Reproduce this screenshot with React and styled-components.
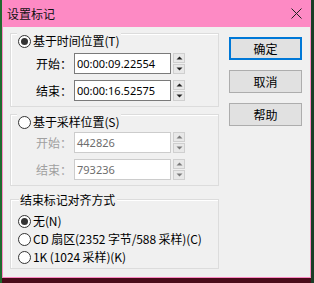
import React from 'react';
import styled, { createGlobalStyle } from 'styled-components';

const Global = createGlobalStyle`
  html, body { margin: 0; padding: 0; }
  body {
    width: 314px; height: 283px; overflow: hidden;
    background: #4a0c1a;
    font-family: "Noto Sans CJK SC", "Noto Sans", sans-serif;
  }
`;

const Desktop = styled.div`
  width: 314px; height: 283px;
  display: flex; align-items: flex-start;
  background:
    linear-gradient(to right, #1f6a2e 0, #1f6a2e 2px, transparent 2px, transparent 311px, #1b3d26 311px),
    #4a0c1a;
`;

const Window = styled.div`
  margin-left: 2px;
  width: 309px; height: 278px;
  display: flex; flex-direction: column;
`;

const TitleBar = styled.div`
  height: 27px; flex: none;
  background: #fd8ac4;
  display: flex; align-items: center; justify-content: space-between;
  padding: 0 9px 0 5px;
  box-sizing: border-box;
`;

const Title = styled.span`
  font-size: 12px; color: #111; line-height: 16px;
`;

const Client = styled.div`
  flex: 1;
  background: #f0f0f0;
  border: 1px solid #fd8ac4; border-top: none;
  display: flex; align-items: flex-start;
  padding: 6px 0 0 7px;
  box-sizing: border-box;
  gap: 10px;
`;

const LeftCol = styled.div`
  width: 209px;
  display: flex; flex-direction: column;
`;

const Group = styled.div`
  border: 1px solid #dcdcdc;
  box-shadow: inset 1px 1px 0 #fff;
  display: flex; flex-direction: column;
  padding: 0 0 ${p => p.$pb}px 0;
  margin-top: ${p => p.$mt}px;
`;

const Header = styled.div`
  align-self: flex-start;
  margin: ${p => p.$legend ? '-8px 0 0 8px' : '-1px 0 0 6px'};
  padding: 0 2px 0 1px;
  background: #f0f0f0;
  display: flex; align-items: center;
  height: 16px;
  gap: 2px;
  font-size: 12px; color: #000;
`;

const RadioCircle = styled.span`
  width: 13px; height: 13px; box-sizing: border-box;
  border-radius: 50%;
  border: 1px solid #333;
  background: #fff;
  display: inline-flex; align-items: center; justify-content: center;
  flex: none;
  &::after {
    content: '';
    width: 7px; height: 7px; border-radius: 50%;
    background: ${p => p.$on ? '#333' : 'transparent'};
  }
`;

const RadioText = styled.span`
  font-size: 12px; line-height: 16px; white-space: nowrap; color: #000;
  letter-spacing: -0.1px;
`;

const FieldRows = styled.div`
  display: flex; flex-direction: column;
  gap: 6px;
  margin-top: ${p => p.$mt}px;
  padding-left: 25px;
`;

const FieldRow = styled.div`
  display: flex; align-items: center; height: 21px;
`;

const FieldLabel = styled.span`
  width: 38px; font-size: 12px; line-height: 16px;
  color: ${p => p.$disabled ? '#a0a0a0' : '#000'};
`;

const Input = styled.div`
  width: 97px; height: 21px; box-sizing: border-box;
  border: 1px solid ${p => p.$disabled ? '#cccccc' : '#7a7a7a'};
  background: #fff;
  display: flex; align-items: center;
  padding-left: 2px;
  font-family: "Noto Sans", "Noto Sans CJK SC", sans-serif;
  font-size: 11px;
  color: ${p => p.$disabled ? '#6d6d6d' : '#000'};
`;

const Spinner = styled.div`
  margin-left: 2px;
  width: 12px; height: 21px;
  display: flex; flex-direction: column; gap: 1px;
`;

const SpinBtn = styled.div`
  flex: 1;
  background: #e8e8e8;
  border: 1px solid #cfcfcf;
  box-sizing: border-box;
  display: flex; align-items: center; justify-content: center;
`;

const RadioList = styled.div`
  display: flex; flex-direction: column;
  margin-top: 4px;
  padding-left: 7px;
`;

const RadioRow = styled.div`
  height: 18px; display: flex; align-items: center; gap: 2px;
`;

const RightCol = styled.div`
  padding-top: 4px;
  display: flex; flex-direction: column; gap: 10px;
`;

const Button = styled.div`
  width: 73px; height: 23px; box-sizing: border-box;
  background: #e1e1e1;
  border: ${p => p.$primary ? '2px solid #0078d7' : '1px solid #adadad'};
  display: flex; align-items: center; justify-content: center;
  font-size: 12px; color: #000;
`;

const Arrow = ({ up, color }) => (
  <svg width="7" height="4" viewBox="0 0 7 4">
    <path d={up ? 'M0.5 3.5 L3.5 0.5 L6.5 3.5 Z' : 'M0.5 0.5 L3.5 3.5 L6.5 0.5 Z'} fill={color} />
  </svg>
);

const Radio = ({ on, children }) => (
  <>
    <RadioCircle $on={on} />
    <RadioText>{children}</RadioText>
  </>
);

const Field = ({ label, value, disabled }) => (
  <FieldRow>
    <FieldLabel $disabled={disabled}>{label}</FieldLabel>
    <Input $disabled={disabled}>{value}</Input>
    <Spinner>
      <SpinBtn><Arrow up color={disabled ? '#7a7a7a' : '#222'} /></SpinBtn>
      <SpinBtn><Arrow color={disabled ? '#7a7a7a' : '#222'} /></SpinBtn>
    </Spinner>
  </FieldRow>
);

export default function App() {
  return (
    <>
      <Global />
      <Desktop>
        <Window>
          <TitleBar>
            <Title>设置标记</Title>
            <svg width="11" height="11" viewBox="0 0 11 11">
              <path d="M0.5 0.5 L10.5 10.5 M10.5 0.5 L0.5 10.5" stroke="#222" strokeWidth="1" />
            </svg>
          </TitleBar>
          <Client>
            <LeftCol>
              <Group $mt={0} $pb={5}>
                <Header><Radio on>基于时间位置(T)</Radio></Header>
                <FieldRows $mt={4}>
                  <Field label="开始：" value="00:00:09.22554" />
                  <Field label="结束：" value="00:00:16.52575" />
                </FieldRows>
              </Group>
              <Group $mt={7} $pb={5}>
                <Header><Radio>基于采样位置(S)</Radio></Header>
                <FieldRows $mt={2}>
                  <Field label="开始：" value="442826" disabled />
                  <Field label="结束：" value="793236" disabled />
                </FieldRows>
              </Group>
              <Group $mt={13} $pb={2}>
                <Header $legend><RadioText>结束标记对齐方式</RadioText></Header>
                <RadioList>
                  <RadioRow><Radio on>无(N)</Radio></RadioRow>
                  <RadioRow><Radio>CD 扇区(2352 字节/588 采样)(C)</Radio></RadioRow>
                  <RadioRow><Radio>1K (1024 采样)(K)</Radio></RadioRow>
                </RadioList>
              </Group>
            </LeftCol>
            <RightCol>
              <Button $primary>确定</Button>
              <Button>取消</Button>
              <Button>帮助</Button>
            </RightCol>
          </Client>
        </Window>
      </Desktop>
    </>
  );
}
